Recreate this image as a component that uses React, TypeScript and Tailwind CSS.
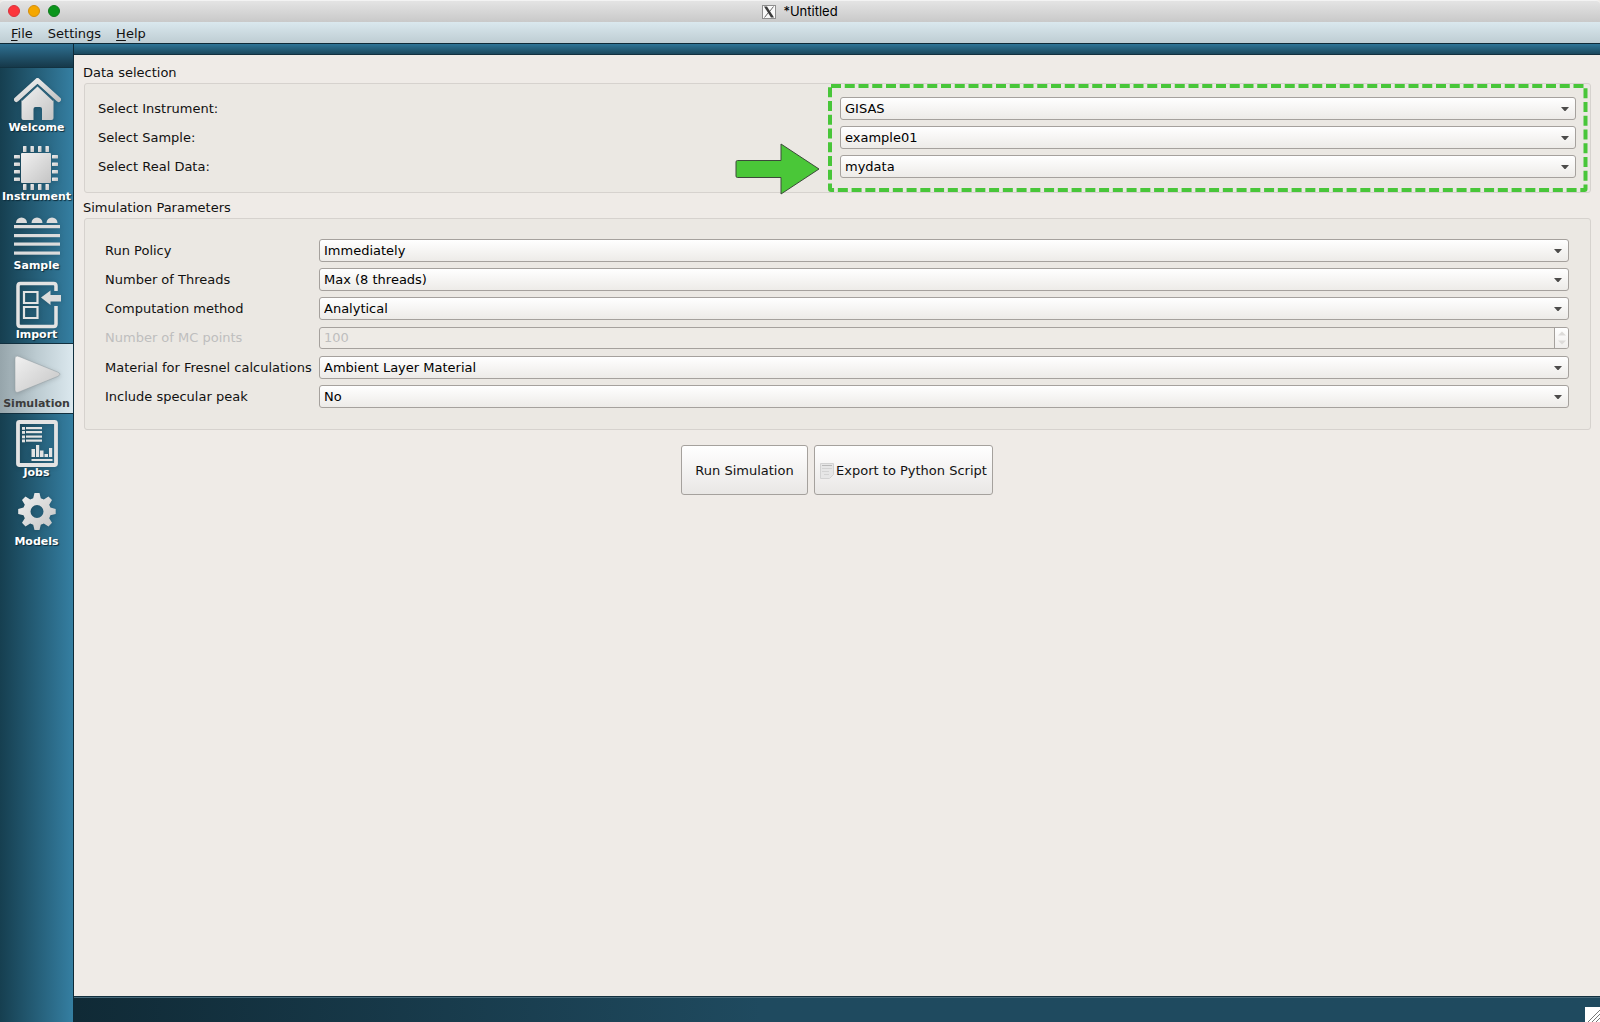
import React, { useId } from "react";

const metal = "url(#metal)";

function HomeIcon() {
  return (
    <>
      <path d="M16.500 31.500 37.500 12.500 58.500 31.500" fill="none" stroke={metal} strokeWidth="5" strokeLinecap="round" strokeLinejoin="round" />
      <path d="M37.500 17.500 53.500 32v18a2 2 0 0 1-2 2H42V41q0-2-2-2h-4.500q-2 0-2 2v11H23.500a2 2 0 0 1-2-2V32z" fill={metal} />
      <path d="M21.500 32.500 37.500 17.500 53.500 32.500" fill="none" stroke="#2a6078" strokeWidth="1.500" />
    </>
  );
}

function ChipIcon() {
  const pins = [23, 30.5, 38, 45.500];
  return (
    <g fill={metal}>
      <rect x="21" y="16" width="30" height="30" rx="1" />
      {pins.map((x) => (
        <g key={x}>
          <rect x={x} y="9" width="3.500" height="6" rx="0.500" />
          <rect x={x} y="47" width="3.500" height="6" rx="0.500" />
          <rect x="14" y={x - 5} width="6" height="3.500" rx="0.500" />
          <rect x="52" y={x - 5} width="6" height="3.500" rx="0.500" />
        </g>
      ))}
    </g>
  );
}

function LayersIcon() {
  return (
    <g fill="#dcdcdc">
      {[16, 31.5, 46.500].map((x) => (
        <path key={x} d={`M${x} 17a5.500 5.500 0 0 1 11 0z`} />
      ))}
      {[19, 28, 36.5, 45.5].map((y) => (
        <rect key={y} x="14" y={y} width="46" height="3.200" />
      ))}
    </g>
  );
}

function ImportIcon() {
  return (
    <>
      <g fill="none" stroke="#e3e3e3">
        <path d="M56 16V11q0-2.500-2.500-2.500H20.500q-2.500 0-2.500 2.500v38q0 2.500 2.500 2.500h33q2.500 0 2.500-2.500V31" strokeWidth="3.500" />
        <path d="M24 17h13.500v11H24zM24 32h13.500v11H24z" strokeWidth="2.200" />
      </g>
      <path d="M41 22.500 50.500 15.500V20H61v6.500H50.500V30z" fill="#dcdcdc" />
    </>
  );
}

function PlayIcon() {
  return <path d="M15 15q0-4 4-2.500L57.500 28q5 2 0 4.500L19 48q-4 1.500-4-2.500z" fill={metal} stroke="#8d999e" strokeWidth="0.500" />;
}

function JobsIcon() {
  return (
    <>
      <rect x="18" y="9" width="38" height="43" rx="1.500" fill="none" stroke="#e3e3e3" strokeWidth="3.800" />
      <g fill="#e3e3e3">
        {[14, 18, 22.5, 26.500].map((y) => (
          <g key={y}>
            <rect x="22" y={y} width="3" height="2.800" />
            <rect x="26" y={y} width="16" height="2.200" />
          </g>
        ))}
        <rect x="31.500" y="36" width="3.500" height="8" />
        <rect x="36" y="32" width="3.200" height="12" />
        <rect x="40" y="37.500" width="3.500" height="6.500" />
        <rect x="44.500" y="41" width="3.500" height="3" />
        <rect x="49" y="35" width="3.200" height="9" />
        <rect x="31.500" y="46" width="21" height="2" />
      </g>
    </>
  );
}

function GearIcon() {
  return (
    <g fill={metal} fillRule="evenodd">
      <path d="M34.500 11h5l1.300 5.200 3 1.300 4.700-3 3.500 3.500-2.800 4.700 1.200 2.800 5.300 1.500v5l-5.300 1.300-1.200 3 2.800 4.500-3.500 3.700-4.700-2.900-3 1.200-1.300 5.200h-5l-1.300-5.200-3-1.200-4.700 2.900-3.500-3.700 2.800-4.500-1.300-3L18.200 32v-5l5.300-1.500 1.300-2.800L22 18l3.500-3.500 4.700 3 3-1.300zM37 23a6.500 6.500 0 1 0 0 13 6.500 6.500 0 0 0 0-13z" />
    </g>
  );
}

const views = [
  { label: "Welcome", Icon: HomeIcon },
  { label: "Instrument", Icon: ChipIcon },
  { label: "Sample", Icon: LayersIcon },
  { label: "Import", Icon: ImportIcon },
  { label: "Simulation", Icon: PlayIcon, active: true },
  { label: "Jobs", Icon: JobsIcon },
  { label: "Models", Icon: GearIcon },
];

function Sidebar() {
  return (
    <nav className="flex w-[74px] shrink-0 flex-col border-r border-[#0f2a37] bg-linear-to-r from-[#163f50] to-[#357fa2]">
      <div className="h-6 shrink-0 border-b border-[#123241] bg-linear-to-b from-[#2f7193] to-[#16394a]" />
      {views.map(({ label, Icon, active }) => (
        <button
          key={label}
          type="button"
          aria-current={active ? "page" : undefined}
          className={
            active
              ? "flex h-[69px] flex-col items-center bg-linear-to-r from-[#96a5ab] via-[#bccbd1] to-[#dbe8ee] text-[#3c3c3c] outline outline-[#12303f]"
              : "flex h-[69px] flex-col items-center text-white [text-shadow:1px_1px_1px_#0c2a38]"
          }
        >
          <svg viewBox="0 0 73 54" className="h-[54px] w-[73px] shrink-0 drop-shadow-sm" aria-hidden="true">
            <Icon />
          </svg>
          <span className="text-[11px] leading-3 font-bold">{label}</span>
        </button>
      ))}
    </nav>
  );
}

const control =
  "block w-full appearance-none rounded-[3px] border border-[#a5a19d] bg-linear-to-b from-white to-[#edebe8] pl-1 text-[13px] text-black";

function Field({ label, options, className }: { label: string; options: string[]; className: string }) {
  const id = useId();
  return (
    <div className={className}>
      <label htmlFor={id}>{label}</label>
      <div className="relative">
        <select id={id} className={`${control} h-[23px] leading-5`}>
          {options.map((o) => (
            <option key={o}>{o}</option>
          ))}
        </select>
        <svg viewBox="0 0 8 4" className="pointer-events-none absolute top-[10px] right-[7px] h-1 w-2" aria-hidden="true">
          <path d="M0 0h8L4.500 4h-1z" fill="#4c4b4a" />
        </svg>
      </div>
    </div>
  );
}

const dataRow = "grid grid-cols-2 items-center gap-x-[6px]";
const paramRow = "grid grid-cols-[208px_1fr] items-center gap-x-[6px]";
const box = "rounded-[3px] border border-[#d6d2ce] bg-[#ebe8e3]";

function SpinField() {
  return (
    <div className={`${paramRow} my-px text-[#bebebe]`}>
      <label htmlFor="mc-points">Number of MC points</label>
      <div className="flex h-[22px] overflow-hidden rounded-[3px] border border-[#a5a19d] bg-[#eeebe6]">
        <input id="mc-points" type="text" disabled defaultValue="100" className="min-w-0 flex-1 pl-1 text-[13px] text-[#bebebe]" />
        <div className="flex w-[14px] flex-col items-center justify-center border-l border-[#a5a19d] bg-linear-to-b from-white to-[#f0eeec]">
          <svg viewBox="0 0 8 14" className="h-[14px] w-2" aria-hidden="true">
            <path d="M0 4.500 4 .5l4 4zM0 9.500l4 4 4-4z" fill="#dddbd9" />
          </svg>
        </div>
      </div>
    </div>
  );
}

export default function App() {
  return (
    <div className="flex min-h-screen flex-col bg-[#efebe7] font-['DejaVu_Sans',sans-serif] text-[13px] leading-4 text-[#111]">
      <svg width="0" height="0" className="absolute" aria-hidden="true">
        <linearGradient id="metal" x1="0" y1="0" x2="1" y2="1">
          <stop offset="0" stopColor="#f1f1f1" />
          <stop offset="1" stopColor="#c4c4c4" />
        </linearGradient>
      </svg>

      <header className="relative flex h-[22px] shrink-0 items-center justify-center gap-[7px] rounded-t-[4px] border-t border-[#f3f3f3] bg-linear-to-b from-[#e4e4e4] to-[#c9c9c9]">
        <div className="absolute top-1 left-2 flex gap-2">
          <button type="button" aria-label="Close" className="size-3 rounded-full border border-[#d9323c] bg-[#fc353b]" />
          <button type="button" aria-label="Minimize" className="size-3 rounded-full border border-[#d48d0c] bg-[#f5a700]" />
          <button type="button" aria-label="Zoom" className="size-3 rounded-full border border-[#117a1d] bg-[#0b951b]" />
        </div>
        <svg viewBox="0 0 14 14" className="size-[14px]" aria-hidden="true">
          <rect x="0.500" y="0.500" width="13" height="13" fill="#fafafa" stroke="#8e8e8e" />
          <path d="M2 1.500h3L12 12.500H9z" fill="#3b3b3b" />
          <path d="M11.500 1.500 8 6M6 8 2.500 12.500" stroke="#666" fill="none" />
        </svg>
        <h1 className="pb-px font-[Inter,sans-serif] text-[13px] text-black">*Untitled</h1>
      </header>

      <div className="flex h-[21px] shrink-0 items-center gap-[15px] bg-linear-to-b from-[#dae8ee] to-[#becdd3] pt-[2px] pl-[11px]">
        <button type="button"><u className="underline-offset-2">F</u>ile</button>
        <button type="button">Settings</button>
        <button type="button"><u className="underline-offset-2">H</u>elp</button>
      </div>

      <div className="flex flex-1 border-t border-[#0f2a37]">
        <Sidebar />
        <div className="flex min-w-0 flex-1 flex-col">
          <div className="h-[11px] shrink-0 border-b border-[#12303f] bg-linear-to-b from-[#2f7597] to-[#1b485d]" />
          <main className="flex-1 px-[9px] pt-[10px]">
            <section>
              <h2 className="mb-[2px]">Data selection</h2>
              <div className={`${box} relative ml-px flex flex-col gap-[6px] pt-[13px] pr-[14px] pb-[14px] pl-[13px]`}>
                <Field label="Select Instrument:" options={["GISAS"]} className={dataRow} />
                <Field label="Select Sample:" options={["example01"]} className={dataRow} />
                <Field label="Select Real Data:" options={["mydata"]} className={dataRow} />
                <div className="pointer-events-none absolute top-[2px] right-[5px] bottom-[2px] left-1/2 -ml-2">
                  <svg className="size-full overflow-visible" aria-hidden="true">
                    <rect width="100%" height="100%" rx="1" fill="none" stroke="#48c639" strokeWidth="4" strokeDasharray="10 3.750" />
                  </svg>
                  <svg viewBox="0 0 84 54" className="absolute top-[56px] right-full mr-[11px] h-[54px] w-[84px]" aria-hidden="true">
                    <path d="M2.500 18.500h43.500V2l38 25-38 25V35.500H2.500q-1.500 0-1.500-1.500V20q0-1.500 1.500-1.500z" fill="#4ac738" stroke="#3c4a3a" />
                  </svg>
                </div>
              </div>
            </section>

            <section className="mt-[7px]">
              <h2 className="mb-[2px]">Simulation Parameters</h2>
              <div className={`${box} ml-px flex flex-col gap-[6px] pt-[20px] pr-[21px] pb-[21px] pl-[20px]`}>
                <Field label="Run Policy" options={["Immediately"]} className={paramRow} />
                <Field label="Number of Threads" options={["Max (8 threads)"]} className={paramRow} />
                <Field label="Computation method" options={["Analytical"]} className={paramRow} />
                <SpinField />
                <Field label="Material for Fresnel calculations" options={["Ambient Layer Material"]} className={paramRow} />
                <Field label="Include specular peak" options={["No"]} className={paramRow} />
              </div>
            </section>

            <div className="mt-[15px] flex justify-center gap-[6px]">
              <button type="button" className="h-[50px] w-[127px] rounded-[3px] border border-[#a5a19d] bg-linear-to-b from-white to-[#e9e7e5] pt-[2px]">
                Run Simulation
              </button>
              <button type="button" className="flex h-[50px] w-[179px] items-center justify-center gap-[2px] rounded-[3px] border border-[#a5a19d] bg-linear-to-b from-white to-[#e9e7e5] pt-[2px] whitespace-nowrap">
                <svg viewBox="0 0 14 16" className="h-4 w-[14px] shrink-0" aria-hidden="true">
                  <path d="M.5.500h13v11l-4 4H.500z" fill="#e6e6e6" stroke="#d2d2d2" />
                  <path d="M2 2.500h10" stroke="#b9b9b9" />
                  <path d="M2 5.500h10M2 8.500h7M4 11.500h5" stroke="#d3d3d3" />
                </svg>
                Export to Python Script
              </button>
            </div>
          </main>
          <footer className="flex h-[26px] shrink-0 items-end justify-end border-t border-[#12303f] bg-linear-to-r from-[#102a36] to-[#1f4a5f] to-45% shadow-[inset_0_1px_#47697a]">
            <svg viewBox="0 0 15 15" className="size-[15px]" aria-hidden="true">
              <path d="M0 0h15v15H0z" fill="#fff" />
              <path d="M3 15 15 3M7 15l8-8M11 15l4-4" stroke="#777" fill="none" />
            </svg>
          </footer>
        </div>
      </div>
    </div>
  );
}
